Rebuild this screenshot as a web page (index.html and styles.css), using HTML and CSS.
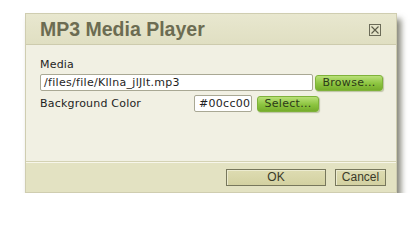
FILE: index.html
```html
<!DOCTYPE html>
<html>
<head>
<meta charset="utf-8">
<link rel="stylesheet" href="styles.css">
</head>
<body>
<div class="dialog">
  <div class="titlebar">
    <span class="title">MP3 Media Player</span>
    <span class="close"><svg width="12" height="12" viewBox="0 0 12 12"><rect x="0.5" y="0.5" width="11" height="11" fill="none" stroke="#6b6b58"/><path d="M2.5 2.5 L9.5 9.5 M9.5 2.5 L2.5 9.5" stroke="#5a5a48" stroke-width="1.1"/></svg></span>
  </div>
  <div class="content">
    <div class="label">Media</div>
    <div class="row">
      <div class="input wide">/files/file/Kllna_jlJlt.mp3</div>
      <div class="gbtn browse">Browse...</div>
    </div>
    <div class="row row2">
      <div class="label inline">Background Color</div>
      <div class="input color">#00cc00</div>
      <div class="gbtn select">Select...</div>
    </div>
  </div>
  <div class="footer">
    <div class="fbtn ok">OK</div>
    <div class="fbtn cancel">Cancel</div>
  </div>
</div>
</body>
</html>
```
FILE: styles.css
```css
html, body { margin: 0; padding: 0; background: #ffffff; }
body { padding: 13px 0 0 25px; }
.dialog {
  width: 370px;
  height: 178px;
  border: 1px solid #cfcdb0;
  background: #f1f0e3;
  box-shadow: 4px 6px 6px rgba(50,50,30,0.6);
  display: flex;
  flex-direction: column;
  font-family: "DejaVu Sans", Verdana, sans-serif;
  font-size: 11px;
  color: #1e1e1e;
}
.titlebar {
  height: 30px;
  background: linear-gradient(#e8e7cf, #e0dfc2);
  border-bottom: 1px solid #cdcbad;
  display: flex;
  align-items: center;
  justify-content: space-between;
  padding: 0 15px 0 14px;
}
.title {
  font-family: "Liberation Sans", Arial, sans-serif;
  font-weight: bold;
  font-size: 19.5px;
  color: #6c6c52;
  margin-top: 1px;
}
.close { display: flex; margin-top: 2px; }
.content {
  flex: 1;
  padding: 13px 0 0 14px;
}
.label { line-height: 13px; height: 13px; margin-bottom: 3px; letter-spacing: 0.2px; }
.row { display: flex; align-items: center; }
.row2 { margin-top: 4px; }
.label.inline { width: 154px; margin: 0; }
.input {
  box-sizing: border-box;
  height: 17px;
  border: 1px solid #a9a894;
  border-radius: 2px;
  background: #fff;
  padding: 0 3px;
  line-height: 15px;
  white-space: nowrap;
  overflow: hidden;
  letter-spacing: 0.3px;
}
.input.wide { width: 273px; }
.input.color { width: 58px; padding-left: 4px; }
.gbtn {
  box-sizing: border-box;
  height: 16px;
  border-radius: 3px;
  background: linear-gradient(#b9e078, #8cc43f 55%, #76ad2c);
  border: 1px solid #7fb23a;
  box-shadow: 1px 1px 1px rgba(90,110,40,0.35);
  color: #2c3a18;
  text-align: center;
  line-height: 14px;
  letter-spacing: 0.3px;
}
.browse { width: 68px; margin-left: 2px; }
.select { width: 62px; margin-left: 5px; }
.footer {
  height: 31px;
  border-top: 1px solid #d4d2b3;
  box-shadow: inset 0 1px 0 #f7f6ea;
  background: #e3e2c2;
  display: flex;
  align-items: flex-start;
  justify-content: flex-end;
  padding: 7px 10px 0 0;
  box-sizing: border-box;
}
.fbtn {
  box-sizing: border-box;
  height: 17px;
  border: 1px solid #77775c;
  background: linear-gradient(#dedcb2, #d3d1a1);
  box-shadow: inset 1px 1px 0 #ecebd0;
  font-family: "Liberation Sans", Arial, sans-serif;
  font-size: 12px;
  color: #3a3a2a;
  text-align: center;
  line-height: 15px;
}
.ok { width: 100px; }
.cancel { width: 51px; margin-left: 9px; }
```
